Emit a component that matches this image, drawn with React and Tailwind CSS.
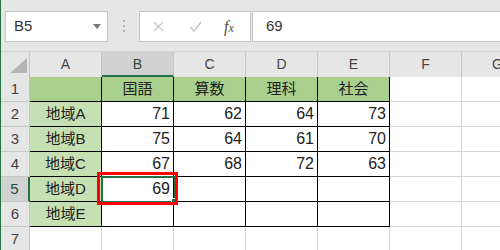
import React from 'react';

const cols = ['A', 'B', 'C', 'D', 'E', 'F', 'G'];

const rows = [
  ['', '国語', '算数', '理科', '社会'],
  ['地域A', '71', '62', '64', '73'],
  ['地域B', '75', '64', '61', '70'],
  ['地域C', '67', '68', '72', '63'],
  ['地域D', '69', '', '', ''],
  ['地域E', '', '', '', ''],
  null,
];

const font = { fontFamily: '"Liberation Sans", "Noto Sans CJK JP", sans-serif' };

const Toolbar = () => (
  <div className="flex h-[52px] items-start bg-[#e6e6e6] border-b border-[#d5d5d5] pt-[11px]">
    {/* Name box */}
    <div className="ml-[4px] flex h-[31px] w-[103px] items-center justify-between border border-[#c6c6c6] bg-white pl-[8px] pr-[6px]">
      <span className="text-[15px] text-[#333]">B5</span>
      <svg width="8" height="5" viewBox="0 0 8 5">
        <path d="M0 0h8L4 5z" fill="#777" />
      </svg>
    </div>
    {/* Separator dots */}
    <div className="ml-[15px] mt-[9px] flex flex-col gap-[3px]">
      <span className="block h-[2px] w-[2px] bg-[#b3b3b3]" />
      <span className="block h-[2px] w-[2px] bg-[#b3b3b3]" />
      <span className="block h-[2px] w-[2px] bg-[#b3b3b3]" />
    </div>
    {/* Formula buttons */}
    <div className="ml-[14px] flex h-[31px] w-[112px] items-center border border-[#c6c6c6] bg-white">
      <svg className="ml-[13px]" width="11" height="11" viewBox="0 0 11 11">
        <path d="M1 1l9 9M10 1l-9 9" stroke="#c8c8c8" strokeWidth="1.3" />
      </svg>
      <svg className="ml-[25px]" width="13" height="11" viewBox="0 0 13 11">
        <path d="M1 6l4 4 7-9" stroke="#c8c8c8" strokeWidth="1.6" fill="none" />
      </svg>
      <span
        className="ml-[22px] text-[16px] italic text-[#505050]"
        style={{ fontFamily: '"Liberation Serif", serif' }}
      >
        f<span className="text-[12px]">x</span>
      </span>
    </div>
    {/* Formula input */}
    <div className="ml-[1px] flex h-[31px] flex-1 items-center border border-r-0 border-[#c6c6c6] bg-white pl-[13px]">
      <span className="text-[15px] text-[#333]">69</span>
    </div>
  </div>
);

const HeaderRow = () => (
  <div className="flex h-[25px]">
    <div className="relative h-full w-[29px] shrink-0 border-r border-[#c6c6c6] bg-[#e6e6e6]">
      <svg className="absolute left-[9px] top-[6px]" width="17" height="15" viewBox="0 0 17 15">
        <path d="M17 0v15H0z" fill="#b4b4b4" />
      </svg>
    </div>
    {cols.map((c) => (
      <div
        key={c}
        className={
          c === 'B'
            ? 'flex h-full w-[72px] shrink-0 items-center justify-center border-r border-b-2 border-r-[#c6c6c6] border-b-[#217346] bg-[#d2d2d2] pt-[2px] text-[14px] text-[#2e4a3a]'
            : 'flex h-full w-[72px] shrink-0 items-center justify-center border-r border-[#c6c6c6] bg-[#e6e6e6] text-[14px] text-[#444]'
        }
      >
        {c}
      </div>
    ))}
  </div>
);

const DataRow = ({ index, data }) => {
  const selected = index === 5;
  return (
    <div className="flex h-[25px]">
      <div
        className={
          selected
            ? 'flex h-full w-[29px] shrink-0 items-center justify-center border-r-2 border-b border-r-[#217346] border-b-[#c6c6c6] bg-[#d2d2d2] text-[15px] text-[#2e4a3a]'
            : 'flex h-full w-[29px] shrink-0 items-center justify-center border-r border-b border-[#c6c6c6] bg-[#e6e6e6] text-[15px] text-[#444]'
        }
      >
        {index}
      </div>
      {cols.map((c, ci) => {
        const inRange = data && ci < 5;
        const value = inRange ? data[ci] : '';
        let bg = 'bg-white';
        if (inRange && index === 1) bg = 'bg-[#a9d08e]';
        else if (inRange && ci === 0) bg = 'bg-[#c6e0b4]';
        const border = inRange ? 'border-black' : 'border-[#d4d4d4]';
        const align =
          ci === 0 || index === 1 ? 'justify-center text-[15px]' : 'justify-end pr-[3px] text-[16px]';
        const isSel = selected && ci === 1;
        return (
          <div
            key={c}
            className={`relative flex h-full w-[72px] shrink-0 items-center border-r border-b ${border} ${bg} ${align} text-[#222]`}
          >
            {value}
            {isSel && (
              <>
                <div className="absolute -left-[1px] -top-[1px] z-10 h-[27px] w-[75px] border-2 border-[#217346]" />
                <div className="absolute right-[-3px] bottom-[-2px] z-20 h-[5px] w-[5px] border border-white bg-[#217346]" />
                <div className="absolute -left-[5px] -top-[5px] z-30 h-[33px] w-[81px] border-[3px] border-[#ff0000]" />
              </>
            )}
          </div>
        );
      })}
    </div>
  );
};

export default function App() {
  return (
    <div className="h-[250px] w-[500px] overflow-hidden border-l border-[#217346] bg-white" style={font}>
      <Toolbar />
      <HeaderRow />
      {rows.map((r, i) => (
        <DataRow key={i} index={i + 1} data={r} />
      ))}
    </div>
  );
}
